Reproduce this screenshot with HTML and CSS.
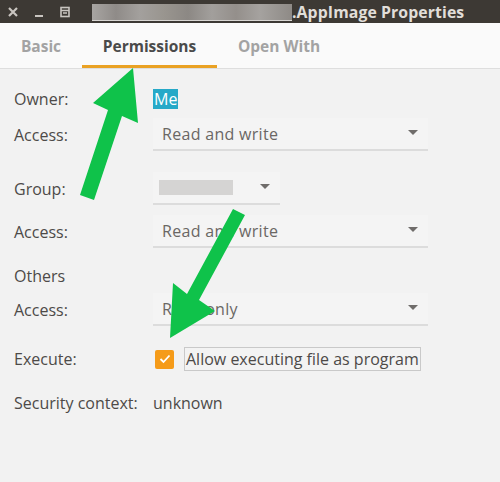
FILE: index.html
```html
<!DOCTYPE html>
<html>
<head>
<meta charset="utf-8">
<link rel="stylesheet" href="styles.css">
</head>
<body>
<div class="window">
  <header class="titlebar">
    <div class="wm-buttons">
      <svg class="wm-btn" width="12" height="12" viewBox="0 0 12 12"><path d="M2 2 L10 10 M10 2 L2 10" stroke="#c9c5c0" stroke-width="2.2" fill="none"/></svg>
      <svg class="wm-btn" width="12" height="12" viewBox="0 0 12 12"><path d="M2 10 H10" stroke="#c9c5c0" stroke-width="2" fill="none"/></svg>
      <svg class="wm-btn" width="12" height="12" viewBox="0 0 12 12"><rect x="2" y="1.5" width="8" height="9" fill="none" stroke="#c9c5c0" stroke-width="1.6"/><path d="M2 4.5 H10 M4 7 H8" stroke="#c9c5c0" stroke-width="1.6"/></svg>
    </div>
    <div class="title">
      <span class="blur"></span><span class="title-text">.AppImage Properties</span>
    </div>
  </header>
  <nav class="tabs">
    <span class="tab">Basic</span>
    <span class="tab active">Permissions</span>
    <span class="tab">Open With</span>
  </nav>
  <main class="form">
    <div class="row r-owner"><span class="label">Owner:</span><span class="sel">Me</span></div>
    <div class="row r-access1"><span class="label">Access:</span><div class="combo"><span>Read and write</span><i class="caret"></i></div></div>
    <div class="row r-group"><span class="label">Group:</span><div class="combo small"><span class="blurbox"></span><i class="caret"></i></div></div>
    <div class="row r-access2"><span class="label">Access:</span><div class="combo"><span>Read and write</span><i class="caret"></i></div></div>
    <div class="row r-others"><span class="label">Others</span></div>
    <div class="row r-access3"><span class="label">Access:</span><div class="combo"><span>Read only</span><i class="caret"></i></div></div>
    <div class="row r-exec"><span class="label">Execute:</span>
      <span class="check"><svg width="12" height="10" viewBox="0 0 12 10"><path d="M1.5 5 L4.5 8 L10.5 1.5" stroke="#fff" stroke-width="1.8" fill="none"/></svg></span>
      <span class="check-label">Allow executing file as program</span>
    </div>
    <div class="row r-sec"><span class="label">Security context:</span><span class="value">unknown</span></div>
  </main>
  <svg class="arrows" width="500" height="482" viewBox="0 0 500 482">
    <polygon points="133,68 138,123 122,116 94,200 80,195 108,110 93,103" fill="#0fc24a"/>
    <polygon points="170,338 173,283 187,294 233,209 245,215 199,300 215,311" fill="#0fc24a"/>
  </svg>
</div>
</body>
</html>
```
FILE: styles.css
```css
* { box-sizing: border-box; }
html, body { margin: 0; padding: 0; }
body {
  width: 500px;
  height: 482px;
  background: #f2f2f2;
  font-family: "Open Sans", "DejaVu Sans", sans-serif;
  overflow: hidden;
}
.window { position: relative; width: 500px; height: 482px; }
.titlebar {
  height: 23px;
  background: #3d3934;
  display: flex;
  align-items: center;
}
.wm-buttons { display: flex; gap: 14px; padding-left: 7px; width: 92px; }
.wm-btn { display: block; }
.title { display: flex; align-items: center; height: 23px; }
.blur {
  width: 200px;
  height: 17px;
  margin-top: 2px;
  background: linear-gradient(90deg, #a8a5a2 0%, #8f8b88 12%, #a3a09d 24%, #99958f 36%, #8c8884 48%, #a29f9c 60%, #948f8b 72%, #a5a29f 84%, #8e8a86 100%);
  border-bottom: 1px solid #d8d6d3;
}
.title-text {
  color: #e1ded9;
  font-weight: bold;
  font-size: 15.8px;
  letter-spacing: 0.1px;
}
.tabs {
  height: 46px;
  background: #fafafa;
  border-bottom: 1px solid #dedede;
  display: flex;
  align-items: stretch;
  padding-left: 0;
}
.tab {
  display: flex;
  align-items: center;
  justify-content: center;
  font-weight: bold;
  font-size: 15.5px;
  color: #a3a3a3;
  border-bottom: 3px solid transparent;
  padding-top: 4px;
}
.tab:nth-child(1) { width: 82px; }
.tab:nth-child(2) { width: 135px; color: #4a4a4a; border-bottom-color: #eaa224; }
.tab:nth-child(3) { width: 124px; }
.form { padding-left: 14px; font-size: 16px; color: #4d4a48; }
.row { display: flex; align-items: center; }
.label { width: 139px; flex: none; white-space: nowrap; }
.sel { background: #26a9c8; color: #fff; padding: 0 1px; line-height: 20px; }
.combo {
  width: 275px;
  height: 33px;
  display: flex;
  align-items: center;
  justify-content: space-between;
  padding: 0 10px 0 9px;
  border-bottom: 2px solid #dcdcdc;
  background: #f4f4f4;
  color: #6a6764;
}
.combo span { letter-spacing: 0.3px; }
.combo.small { width: 127px; padding-left: 6px; }
.blurbox { width: 74px; height: 15px; background: #d5d4d3; }
.caret {
  width: 0; height: 0;
  border-left: 5px solid transparent;
  border-right: 5px solid transparent;
  border-top: 5px solid #6f6c6a;
  margin-top: -2px;
}
.r-owner { height: 20px; margin-top: 20px; }
.r-access1 { margin-top: 9px; }
.r-group { margin-top: 21px; }
.r-access2 { margin-top: 10px; }
.r-others { height: 20px; margin-top: 18px; }
.r-access3 { margin-top: 7px; }
.r-exec { height: 24px; margin-top: 21px; }
.r-sec { height: 20px; margin-top: 22px; }
.check {
  width: 19px; height: 19px;
  margin-left: 2px;
  border-radius: 2px;
  background: #f59b19;
  display: flex; align-items: center; justify-content: center;
}
.check-label {
  margin-left: 10px;
  height: 24px;
  border: 1px solid #c9c9c9;
  padding: 0 1px;
  line-height: 22px;
  background: #f3f3f3;
  color: #4d4a48;
}
.value { color: #4d4a48; }
.arrows { position: absolute; left: 0; top: 0; pointer-events: none; }
```
